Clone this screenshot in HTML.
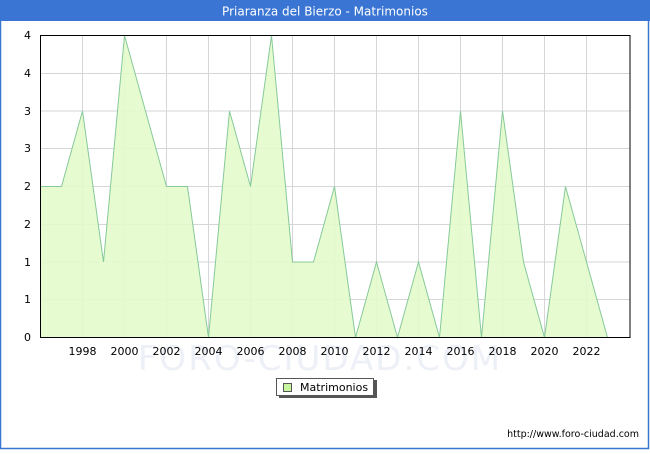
<!DOCTYPE html>
<html><head><meta charset="utf-8"><style>
html,body{margin:0;padding:0;background:#fff;}
body{width:650px;height:450px;overflow:hidden;font-family:"DejaVu Sans","Liberation Sans",sans-serif;}
</style></head><body>
<svg width="650" height="450" viewBox="0 0 650 450" xmlns="http://www.w3.org/2000/svg" font-family="DejaVu Sans, Liberation Sans, sans-serif">
<rect x="0" y="0" width="650" height="450" fill="#fff"/>
<rect x="0.5" y="0.5" width="648" height="448" fill="none" stroke="#3a75d4" stroke-width="1.5"/>
<rect x="0" y="0" width="650" height="21" fill="#3a75d4"/>
<text x="325" y="15.5" text-anchor="middle" font-size="12" fill="#fff">Priaranza del Bierzo - Matrimonios</text>
<text x="320" y="370" text-anchor="middle" font-size="34" fill="#eef0f8" letter-spacing="2">FORO-CIUDAD.COM</text>
<g stroke="#d6d6d6" stroke-width="1">
<line x1="40.5" y1="73.5" x2="630" y2="73.5"/><line x1="40.5" y1="111" x2="630" y2="111"/><line x1="40.5" y1="148.5" x2="630" y2="148.5"/><line x1="40.5" y1="186.5" x2="630" y2="186.5"/><line x1="40.5" y1="224.5" x2="630" y2="224.5"/><line x1="40.5" y1="262" x2="630" y2="262"/><line x1="40.5" y1="299.5" x2="630" y2="299.5"/>
<line x1="82.5" y1="36" x2="82.5" y2="337"/><line x1="124.5" y1="36" x2="124.5" y2="337"/><line x1="166.5" y1="36" x2="166.5" y2="337"/><line x1="208.5" y1="36" x2="208.5" y2="337"/><line x1="250.5" y1="36" x2="250.5" y2="337"/><line x1="292.5" y1="36" x2="292.5" y2="337"/><line x1="334.5" y1="36" x2="334.5" y2="337"/><line x1="376.5" y1="36" x2="376.5" y2="337"/><line x1="418.5" y1="36" x2="418.5" y2="337"/><line x1="460.5" y1="36" x2="460.5" y2="337"/><line x1="502.5" y1="36" x2="502.5" y2="337"/><line x1="544.5" y1="36" x2="544.5" y2="337"/><line x1="586.5" y1="36" x2="586.5" y2="337"/>
</g>
<polygon fill="#e3fccb" fill-opacity="0.9" stroke="none" points="40.5,337.5 40.5,186.5 61.5,186.5 82.5,111 103.5,262 124.5,35.5 145.5,111 166.5,186.5 187.5,186.5 208.5,337.5 229.5,111 250.5,186.5 271.5,35.5 292.5,262 313.5,262 334.5,186.5 355.5,337.5 376.5,262 397.5,337.5 418.5,262 439.5,337.5 460.5,111 481.5,337.5 502.5,111 523.5,262 544.5,337.5 565.5,186.5 586.5,262 607.5,337.5"/>
<polyline fill="none" stroke="#86c99a" stroke-width="1" points="40.5,186.5 61.5,186.5 82.5,111 103.5,262 124.5,35.5 145.5,111 166.5,186.5 187.5,186.5 208.5,337.5 229.5,111 250.5,186.5 271.5,35.5 292.5,262 313.5,262 334.5,186.5 355.5,337.5 376.5,262 397.5,337.5 418.5,262 439.5,337.5 460.5,111 481.5,337.5 502.5,111 523.5,262 544.5,337.5 565.5,186.5 586.5,262 607.5,337.5"/>
<rect x="40.5" y="35.5" width="589.5" height="302" fill="none" stroke="#000" stroke-width="1"/>
<g font-size="11" fill="#000" text-anchor="end">
<text x="31" y="39">4</text><text x="31" y="77">4</text><text x="31" y="115">3</text><text x="31" y="152">3</text><text x="31" y="190">2</text><text x="31" y="228">2</text><text x="31" y="266">1</text><text x="31" y="303">1</text><text x="31" y="341">0</text>
</g>
<g font-size="11" fill="#000" text-anchor="middle">
<text x="82.5" y="355">1998</text><text x="124.5" y="355">2000</text><text x="166.5" y="355">2002</text><text x="208.5" y="355">2004</text><text x="250.5" y="355">2006</text><text x="292.5" y="355">2008</text><text x="334.5" y="355">2010</text><text x="376.5" y="355">2012</text><text x="418.5" y="355">2014</text><text x="460.5" y="355">2016</text><text x="502.5" y="355">2018</text><text x="544.5" y="355">2020</text><text x="586.5" y="355">2022</text>
</g>
<rect x="279" y="380" width="98" height="18" fill="#555"/>
<rect x="276.5" y="378.5" width="97" height="17" fill="#fff" stroke="#555" stroke-width="1"/>
<rect x="283.5" y="383.5" width="8" height="8" fill="#c8f5a0" stroke="#555" stroke-width="1"/>
<text x="300" y="391" font-size="11" fill="#000">Matrimonios</text>
<text x="639" y="437" text-anchor="end" font-size="9.5" fill="#000">http://www.foro-ciudad.com</text>
</svg>
</body></html>
